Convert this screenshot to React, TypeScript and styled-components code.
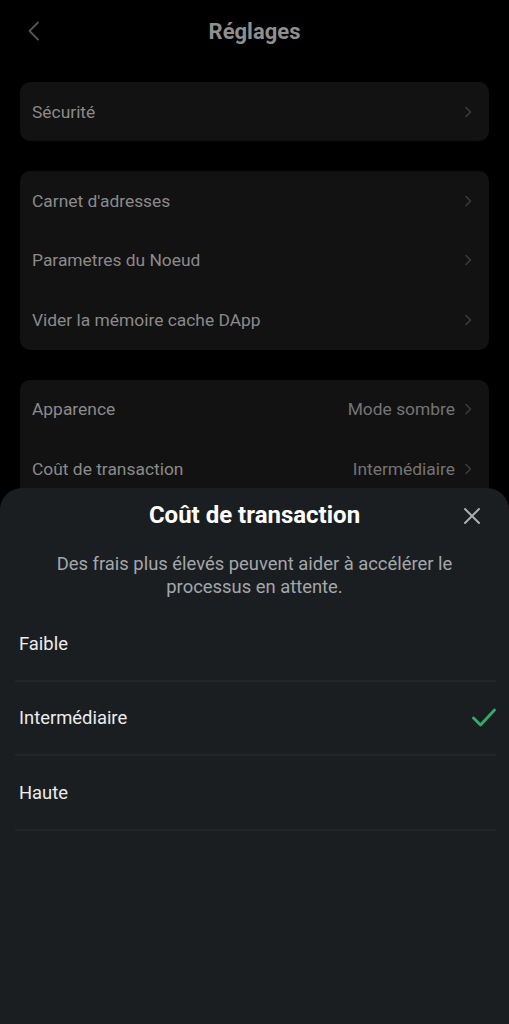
import React from 'react';
import styled, { createGlobalStyle } from 'styled-components';

const GlobalStyle = createGlobalStyle`
  html, body {
    margin: 0;
    padding: 0;
    background: #000;
    font-family: Roboto, "Noto Sans", "Liberation Sans", sans-serif;
  }
`;

const Screen = styled.div`
  position: relative;
  width: 509px;
  height: 1024px;
  overflow: hidden;
  background: #000;
`;

const Header = styled.header`
  position: relative;
  display: flex;
  align-items: center;
  justify-content: center;
  height: 62px;
  margin-bottom: 20px;
`;

const BackButton = styled.div`
  position: absolute;
  left: 26px;
  top: 21px;
  display: flex;
`;

const Title = styled.h1`
  margin: 0;
  font-size: 22px;
  font-weight: 700;
  color: #8f8f8f;
`;

const Groups = styled.div`
  display: flex;
  flex-direction: column;
  gap: 30px;
  padding: 0 20px;
`;

const Card = styled.div`
  background: #121212;
  border-radius: 10px;
`;

const Row = styled.div`
  display: flex;
  align-items: center;
  height: 59.4px;
  padding: 0 17px 0 12px;
  font-size: 17.4px;
  color: #8a8a8a;
`;

const Label = styled.span`
  flex: 1;
`;

const Value = styled.span`
  margin-right: 9px;
  color: #747474;
`;

const Sheet = styled.div`
  position: absolute;
  left: 0;
  right: 0;
  top: 488px;
  bottom: 0;
  background: #1b1e21;
  border-radius: 22px 22px 0 0;
  display: flex;
  flex-direction: column;
`;

const SheetHead = styled.div`
  position: relative;
  display: flex;
  justify-content: center;
  padding-top: 13px;
`;

const SheetTitle = styled.h2`
  margin: 0;
  font-size: 24px;
  line-height: 28px;
  font-weight: 700;
  color: #ffffff;
`;

const CloseButton = styled.div`
  position: absolute;
  right: 28px;
  top: 19px;
  display: flex;
`;

const Description = styled.p`
  margin: 23px 40px 0;
  text-align: center;
  font-size: 18.4px;
  line-height: 23px;
  color: #a3a7ab;
`;

const Options = styled.div`
  display: flex;
  flex-direction: column;
  margin: 9px 13px 0 15px;
`;

const Option = styled.div`
  display: flex;
  align-items: center;
  justify-content: space-between;
  height: 72.5px;
  padding-left: 4px;
  border-bottom: 2px solid #22262a;
  font-size: 18.4px;
  color: #ececec;
`;

const Chevron = () => (
  <svg width="8" height="12" viewBox="0 0 8 12" fill="none">
    <path d="M2 1.5L6.5 6L2 10.5" stroke="#3b3b3b" strokeWidth="1.6" strokeLinecap="round" strokeLinejoin="round" />
  </svg>
);

const rowsByGroup: { label: string; value?: string }[][] = [
  [{ label: 'Sécurité' }],
  [
    { label: "Carnet d'adresses" },
    { label: 'Parametres du Noeud' },
    { label: 'Vider la mémoire cache DApp' },
  ],
  [
    { label: 'Apparence', value: 'Mode sombre' },
    { label: 'Coût de transaction', value: 'Intermédiaire' },
    { label: 'Langue', value: 'Français' },
  ],
];

const fees = ['Faible', 'Intermédiaire', 'Haute'];
const selected = 'Intermédiaire';

const App = () => {
  return (
    <Screen>
      <GlobalStyle />
      <Header>
        <BackButton>
          <svg width="16" height="20" viewBox="0 0 16 20" fill="none">
            <path d="M12 1.5L3.5 10L12 18.5" stroke="#555" strokeWidth="1.8" strokeLinecap="round" strokeLinejoin="round" />
          </svg>
        </BackButton>
        <Title>Réglages</Title>
      </Header>
      <Groups>
        {rowsByGroup.map((group, i) => (
          <Card key={i}>
            {group.map((row) => (
              <Row key={row.label}>
                <Label>{row.label}</Label>
                {row.value && <Value>{row.value}</Value>}
                <Chevron />
              </Row>
            ))}
          </Card>
        ))}
      </Groups>

      <Sheet>
        <SheetHead>
          <SheetTitle>Coût de transaction</SheetTitle>
          <CloseButton>
            <svg width="18" height="18" viewBox="0 0 18 18" fill="none">
              <path d="M2 2L16 16M16 2L2 16" stroke="#a9adb1" strokeWidth="2" strokeLinecap="round" />
            </svg>
          </CloseButton>
        </SheetHead>
        <Description>
          Des frais plus élevés peuvent aider à accélérer le processus en attente.
        </Description>
        <Options>
          {fees.map((fee) => (
            <Option key={fee}>
              <span>{fee}</span>
              {fee === selected && (
                <svg width="24" height="20" viewBox="0 0 24 20" fill="none">
                  <path d="M1.5 10L8.5 17L22.5 2" stroke="#2fae6a" strokeWidth="2.8" strokeLinecap="round" strokeLinejoin="round" />
                </svg>
              )}
            </Option>
          ))}
        </Options>
      </Sheet>
    </Screen>
  );
};

export default App;
